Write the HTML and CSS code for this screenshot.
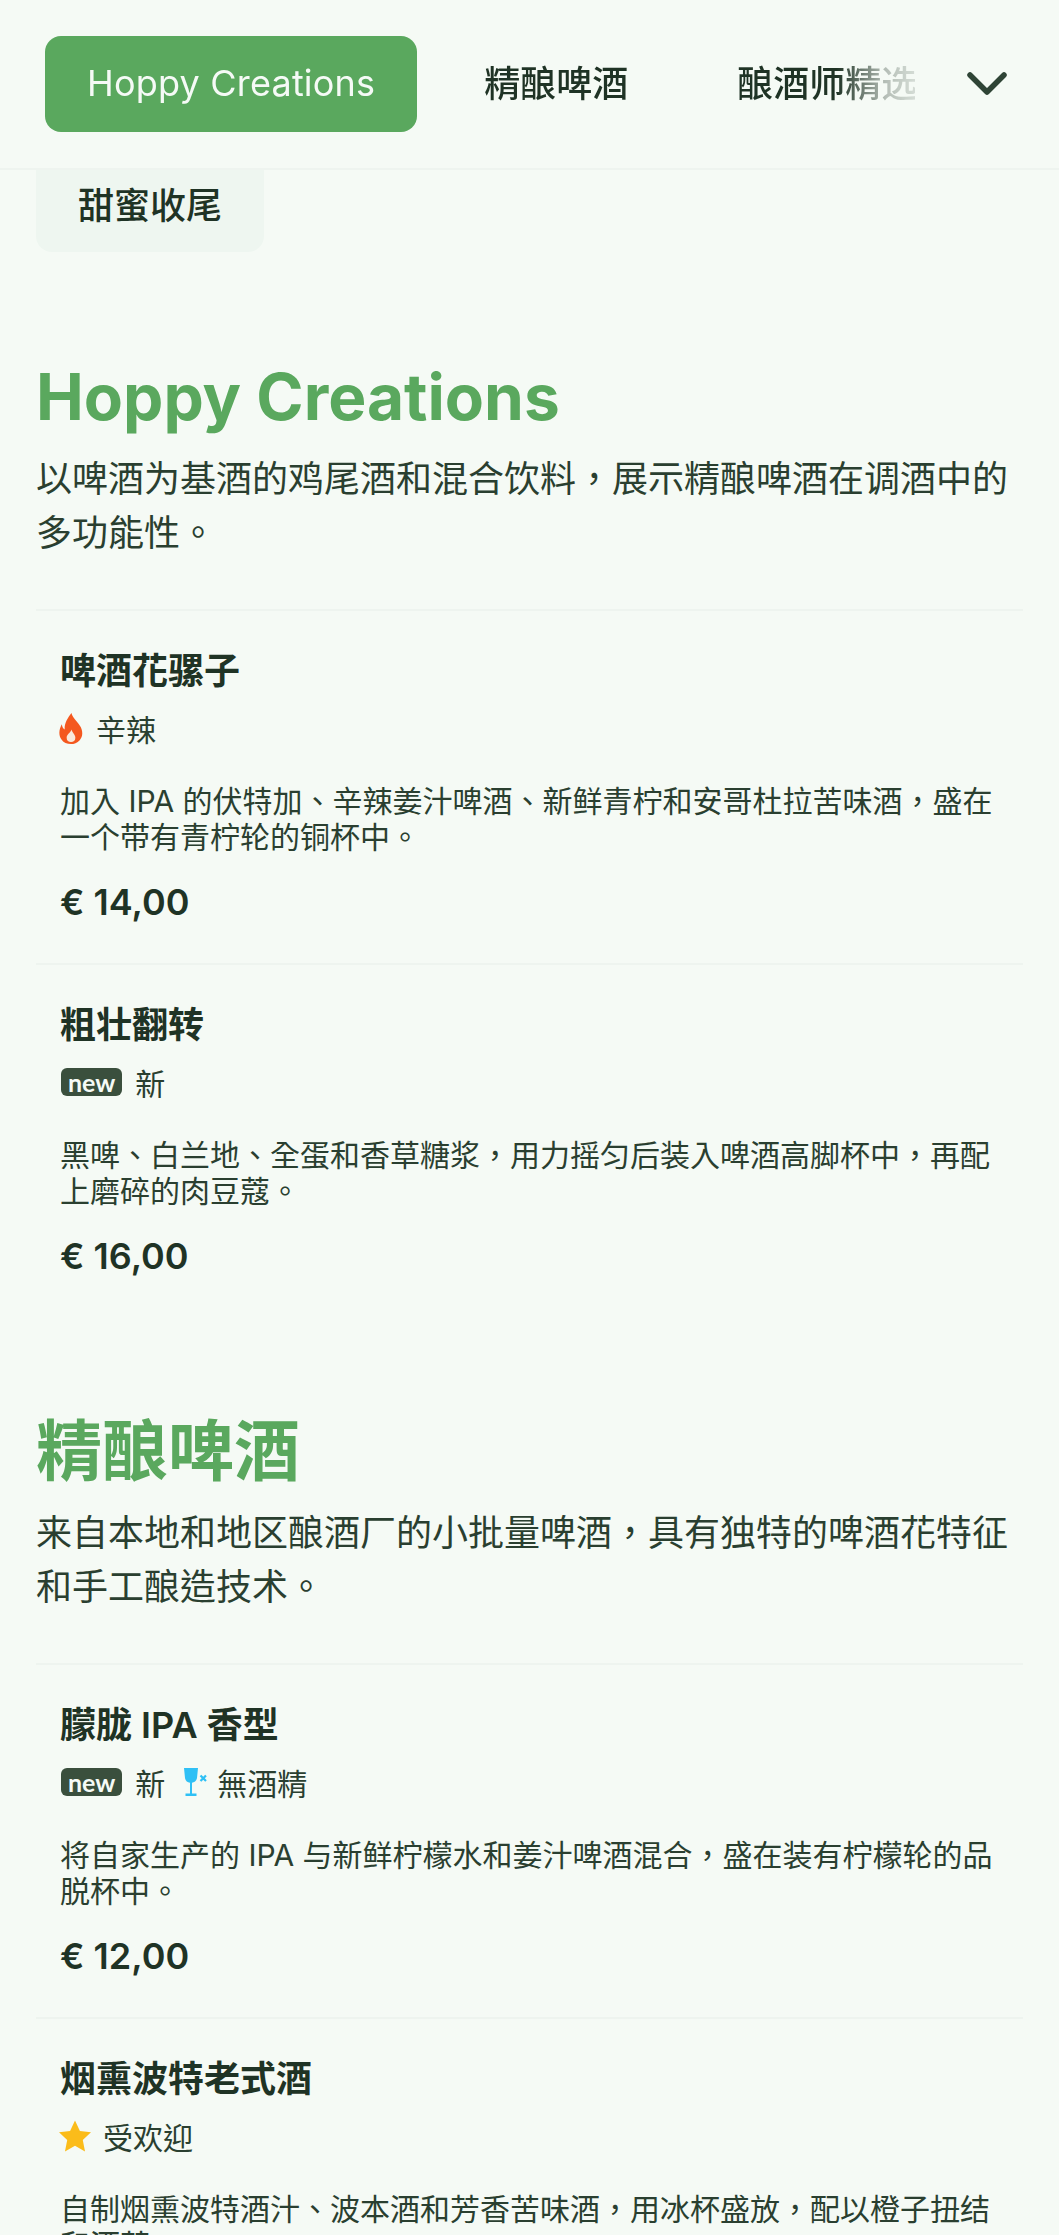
FILE: index.html
```html
<!DOCTYPE html>
<html lang="zh-TW">
<head>
<meta charset="utf-8">
<title>Menu</title>
<link rel="stylesheet" href="styles.css">
</head>
<body>
<header class="topbar">
  <nav class="nav-scroller">
    <a class="nav-pill active">Hoppy Creations</a>
    <a class="nav-pill">精酿啤酒</a>
    <a class="nav-pill">酿酒师精选</a>
  </nav>
  <svg class="chevron" viewBox="0 0 40 24" aria-hidden="true"><path d="M3 3 L20 20 L37 3" fill="none" stroke="#2f4436" stroke-width="5.5" stroke-linecap="round" stroke-linejoin="round"/></svg>
</header>
<main class="content">
  <div class="tab-row"><a class="sub-tab">甜蜜收尾</a></div>

  <section class="category">
    <h2 class="cat-title cat-title-latin">Hoppy Creations</h2>
    <p class="cat-desc">以啤酒为基酒的鸡尾酒和混合饮料，展示精酿啤酒在调酒中的多功能性。</p>
    <article class="item">
      <h3 class="item-name">啤酒花骡子</h3>
      <div class="tags">
        <span class="tag"><svg class="ico-flame" viewBox="0 0 24 32"><path d="M12.5 0 C13.5 5 18 8 21 13 C24.5 18 24.5 24 21 28 C18.5 31 15 32 12 32 C8 32 4 30.5 2 27 C-1 22.5 -.5 17 2.5 11.5 C3 14.5 4 16 5.5 17 C5 11 8.5 5 12.5 0 Z" fill="#f4581f"/><path d="M12.5 17 C13 20 16.5 22 16.5 25.5 C16.5 28.5 14.5 30 12 30 C9.5 30 7.5 28.5 7.5 25.5 C7.5 22 11.5 20.5 12.5 17 Z" fill="#f9e9dc"/></svg>辛辣</span>
      </div>
      <p class="item-desc">加入 IPA 的伏特加、辛辣姜汁啤酒、新鲜青柠和安哥杜拉苦味酒，盛在一个带有青柠轮的铜杯中。</p>
      <div class="price">€ 14,00</div>
    </article>
    <article class="item">
      <h3 class="item-name">粗壮翻转</h3>
      <div class="tags">
        <span class="tag"><span class="badge-new">new</span>新</span>
      </div>
      <p class="item-desc">黑啤、白兰地、全蛋和香草糖浆，用力摇匀后装入啤酒高脚杯中，再配上磨碎的肉豆蔻。</p>
      <div class="price">€ 16,00</div>
    </article>
  </section>

  <section class="category">
    <h2 class="cat-title">精酿啤酒</h2>
    <p class="cat-desc">来自本地和地区酿酒厂的小批量啤酒，具有独特的啤酒花特征和手工酿造技术。</p>
    <article class="item">
      <h3 class="item-name">朦胧 IPA 香型</h3>
      <div class="tags">
        <span class="tag"><span class="badge-new">new</span>新</span>
        <span class="tag"><svg class="ico-glass" viewBox="0 0 24 30"><path d="M1 1 H15 L14 11 C13.5 14 11 15.5 9 15.7 V26.5 H13.5 V29 H2.5 V26.5 H7 V15.7 C4.5 15.5 2.5 14 2 11 Z" fill="#2fc0f5"/><path d="M17.5 8.5 L23 14 M23 8.5 L17.5 14" stroke="#2fc0f5" stroke-width="2.2" fill="none"/></svg>無酒精</span>
      </div>
      <p class="item-desc">将自家生产的 IPA 与新鲜柠檬水和姜汁啤酒混合，盛在装有柠檬轮的品脱杯中。</p>
      <div class="price">€ 12,00</div>
    </article>
    <article class="item">
      <h3 class="item-name">烟熏波特老式酒</h3>
      <div class="tags">
        <span class="tag"><svg class="ico-star" viewBox="0 0 30 30"><path d="M15 .5 L19.6 10.3 L30 11.5 L22.3 18.8 L24.4 29.5 L15 24.2 L5.6 29.5 L7.7 18.8 L0 11.5 L10.4 10.3 Z" fill="#fbbc1a"/></svg>受欢迎</span>
      </div>
      <p class="item-desc">自制烟熏波特酒汁、波本酒和芳香苦味酒，用冰杯盛放，配以橙子扭结和酒草。</p>
      <div class="price">€ 15,00</div>
    </article>
  </section>
</main>
</body>
</html>
```
FILE: styles.css
```css
* { box-sizing: border-box; }
html, body { margin: 0; padding: 0; height: 2235px; overflow: hidden; }
body {
  background: #f5faf5;
  color: #2a3f30;
  font-family: Inter, "Noto Sans CJK TC", sans-serif;
}
.topbar {
  height: 170px;
  display: flex;
  align-items: center;
  padding: 0 52px 0 45px;
  border-bottom: 2px solid #eef4ef;
  gap: 52px;
}
.nav-scroller {
  display: flex;
  align-items: center;
  flex: 1;
  overflow: hidden;
  gap: 25px;
  -webkit-mask-image: linear-gradient(to right, #000 calc(100% - 78px), rgba(0,0,0,.3) calc(100% - 30px), rgba(0,0,0,.15) 100%);
  mask-image: linear-gradient(to right, #000 calc(100% - 78px), rgba(0,0,0,.3) calc(100% - 30px), rgba(0,0,0,.15) 100%);
}
.nav-pill {
  flex: none;
  height: 96px;
  padding: 0 42px 6px;
  display: flex;
  align-items: center;
  font-size: 36px;
  font-weight: 500;
  white-space: nowrap;
  border-radius: 16px;
  color: #1f3325;
}
.nav-pill.active {
  background: #5aa85e;
  color: #f5faf6;
  font-weight: 400;
  letter-spacing: .2px;
  padding-bottom: 3px;
}
.chevron { width: 40px; height: 24px; flex: none; }
.content { padding: 0 36px; }
.tab-row { display: flex; }
.sub-tab {
  width: 228px;
  height: 82px;
  padding-bottom: 17px;
  display: flex;
  align-items: center;
  justify-content: center;
  background: #eef6f0;
  border-radius: 0 0 16px 16px;
  font-size: 36px;
  font-weight: 500;
  color: #1f3325;
}
.category { padding-top: 103px; }
.category + .category { padding-top: 92px; }
.cat-title {
  margin: 0;
  font-size: 66px;
  line-height: 84px;
  font-weight: 700;
  color: #5aa85e;
}
.cat-title-latin { font-size: 64px; }
.cat-desc {
  margin: 13px 0 0;
  font-size: 36px;
  line-height: 54px;
  color: #2a3f30;
}
.cat-desc + .item { margin-top: 49px; }
.item {
  border-top: 2px solid #eef4ef;
  padding: 36px 24px 24px;
  height: 354px;
}
.item-name {
  margin: 0;
  font-size: 36px;
  line-height: 48px;
  font-weight: 600;
  color: #1f3325;
}
.tags {
  display: flex;
  gap: 18px;
  margin-top: 13px;
  height: 40px;
  align-items: center;
  font-size: 30px;
}
.tag { display: inline-flex; align-items: center; gap: 13px; color: #2a3f30; }
.badge-new {
  background: #3a4f3d;
  color: #f5faf6;
  font-family: Lato, sans-serif;
  font-size: 25px;
  font-weight: 700;
  line-height: 28px;
  height: 28px;
  padding: 0 7px;
  margin-left: 1px;
  border-radius: 6px;
}
.ico-flame { width: 24px; height: 31px; margin-left: -1px; flex: none; }
.ico-glass { width: 24px; height: 30px; margin-right: -3px; flex: none; }
.ico-star { width: 32px; height: 32px; margin-left: -1px; margin-right: -1px; flex: none; }
.item-desc {
  margin: 35px 0 0;
  font-size: 30px;
  line-height: 36px;
}
.price {
  margin-top: 23px;
  font-size: 36px;
  line-height: 48px;
  font-weight: 600;
  color: #1f3325;
}
```
